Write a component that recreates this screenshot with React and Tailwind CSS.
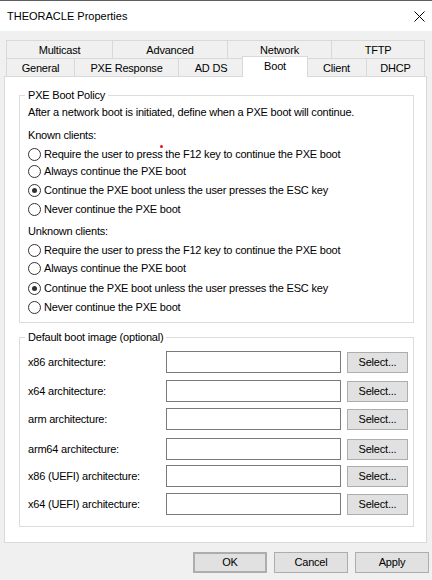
import React from "react";

const BACK_TABS = [
  { label: "Multicast", w: "w-[107px]" },
  { label: "Advanced", w: "w-[116px] -ml-px" },
  { label: "Network", w: "w-[105px] -ml-px" },
  { label: "TFTP", w: "w-[94px] -ml-px" },
];

const FRONT_TABS = [
  { label: "General", w: "w-[69px]" },
  { label: "PXE Response", w: "w-[105px] -ml-px" },
  { label: "AD DS", w: "w-[66px] -ml-px" },
  { label: "Boot", w: "w-[66px] -ml-[2px] -mr-px", active: true },
  { label: "Client", w: "w-[61px] -ml-px" },
  { label: "DHCP", w: "w-[59px] -ml-px" },
];

const RADIO_OPTIONS = [
  "Require the user to press the F12 key to continue the PXE boot",
  "Always continue the PXE boot",
  "Continue the PXE boot unless the user presses the ESC key",
  "Never continue the PXE boot",
];

// spacing above each radio row, known clients then unknown clients
const KNOWN_GAPS = ["mt-[3px]", "mt-[1px]", "mt-[3px]", "mt-[3px]"];
const UNKNOWN_GAPS = ["mt-[3px]", "mt-[2px]", "mt-[4px]", "mt-[3px]"];

const ARCHS = [
  { label: "x86 architecture:", gap: "mt-[7px]" },
  { label: "x64 architecture:", gap: "mt-[7px]" },
  { label: "arm architecture:", gap: "mt-[6px]" },
  { label: "arm64 architecture:", gap: "mt-[8px]" },
  { label: "x86 (UEFI) architecture:", gap: "mt-[5px]" },
  { label: "x64 (UEFI) architecture:", gap: "mt-[6px]" },
];

function Radio({ label, checked, gap }) {
  return (
    <div className={`flex items-center h-[16px] ${gap}`}>
      <span className="w-[13px] h-[13px] rounded-full border border-[#333333] bg-white flex items-center justify-center shrink-0">
        {checked && <span className="w-[5px] h-[5px] rounded-full bg-[#333333]" />}
      </span>
      <span className="ml-[3px] leading-[16px] whitespace-nowrap">{label}</span>
    </div>
  );
}

function Button({ children, className = "" }) {
  return (
    <button
      className={`flex items-center justify-center bg-[#e1e1e1] border border-[#adadad] text-black leading-none ${className}`}
    >
      {children}
    </button>
  );
}

export default function App() {
  return (
    <div className="relative w-[432px] h-[580px] bg-[#f0f0f0] text-black text-[11px] font-['Liberation_Sans',Arial,sans-serif] overflow-hidden">
      {/* title bar */}
      <div className="h-[31px] bg-white border-t border-[#5f5f5f] flex items-center justify-between pl-[7px] pr-[7px]">
        <span className="text-[11px] leading-none">THEORACLE Properties</span>
        <svg width="11" height="11" viewBox="0 0 11 11">
          <path d="M0.5 0.5 L10.5 10.5 M10.5 0.5 L0.5 10.5" stroke="#000" strokeWidth="1" />
        </svg>
      </div>

      <div className="tracking-[-0.2px]">
        {/* tabs */}
        <div className="flex ml-[6px] mt-[9px]">
          {BACK_TABS.map((t) => (
            <div
              key={t.label}
              className={`${t.w} h-[19px] border border-[#d9d9d9] bg-[#f0f0f0] flex items-center justify-center pt-px`}
            >
              {t.label}
            </div>
          ))}
        </div>
        <div className="flex items-start ml-[6px] -mt-px h-[18px] relative z-10">
          {FRONT_TABS.map((t) =>
            t.active ? (
              <div
                key={t.label}
                className={`${t.w} h-[21px] -mt-[2px] border border-b-0 border-[#d9d9d9] bg-white flex items-center justify-center pb-[1px] relative z-10`}
              >
                {t.label}
              </div>
            ) : (
              <div
                key={t.label}
                className={`${t.w} h-[18px] border border-b-0 border-[#d9d9d9] bg-[#f0f0f0] flex items-center justify-center pt-[2px]`}
              >
                {t.label}
              </div>
            )
          )}
        </div>

        {/* tab page */}
        <div className="ml-[4px] w-[423px] h-[467px] border border-[#d9d9d9] bg-white pl-[14px] pr-[12px] pt-[11px]">
          <fieldset className="border border-[#dcdcdc]">
            <legend className="ml-[5px] px-[3px] leading-[14px]">PXE Boot Policy</legend>
            <div className="pl-[8px] pb-[7px]">
              <div className="mt-[2px] leading-[16px] whitespace-nowrap">
                After a network boot is initiated, define when a PXE boot will continue.
              </div>
              <div className="mt-[7px] leading-[16px]">Known clients:</div>
              {RADIO_OPTIONS.map((o, i) => (
                <Radio key={"k" + i} label={o} checked={i === 2} gap={KNOWN_GAPS[i]} />
              ))}
              <div className="mt-[6px] leading-[16px]">Unknown clients:</div>
              {RADIO_OPTIONS.map((o, i) => (
                <Radio key={"u" + i} label={o} checked={i === 2} gap={UNKNOWN_GAPS[i]} />
              ))}
            </div>
          </fieldset>

          <fieldset className="mt-[7px] border border-[#dcdcdc]">
            <legend className="ml-[5px] px-[3px] leading-[14px]">Default boot image (optional)</legend>
            <div className="pl-[8px] pb-[11px]">
              {ARCHS.map((a) => (
                <div key={a.label} className={`flex items-center h-[22px] ${a.gap}`}>
                  <span className="w-[138px] shrink-0 whitespace-nowrap">{a.label}</span>
                  <div className="w-[175px] h-[22px] border border-[#7a7a7a] bg-white shrink-0" />
                  <Button className="ml-[6px] w-[61px] h-[21px]">Select...</Button>
                </div>
              ))}
            </div>
          </fieldset>
        </div>

        {/* dialog buttons */}
        <div className="flex justify-end gap-[7px] pr-[3px] mt-[9px]">
          <Button className="w-[74px] h-[21px] border-2 border-[#0078d7]">OK</Button>
          <Button className="w-[74px] h-[21px]">Cancel</Button>
          <Button className="w-[74px] h-[21px]">Apply</Button>
        </div>
      </div>

      {/* stray red mark from the capture */}
      <span className="absolute left-[160px] top-[145px] w-[3px] h-[3px] rounded-full bg-[#e3121b]" />
    </div>
  );
}
